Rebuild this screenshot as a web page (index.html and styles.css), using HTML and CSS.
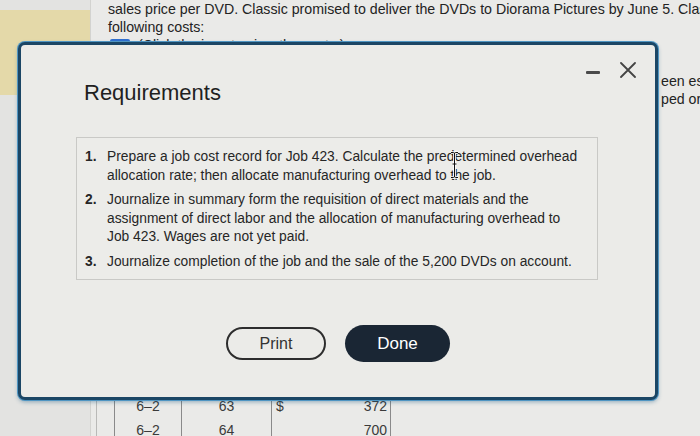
FILE: index.html
```html
<!DOCTYPE html>
<html lang="en">
<head>
<meta charset="utf-8">
<title>Requirements</title>
<link rel="stylesheet" href="styles.css">
</head>
<body>
<div class="page">
  <aside class="side"><div class="side-mark"></div></aside>
  <main class="content">
    <div class="intro">
      <p class="line">sales price per DVD. Classic promised to deliver the DVDs to Diorama Pictures by June 5. Classic incurred the</p>
      <p class="line">following costs:</p>
      <p class="line"><span class="chip"></span>(Click the icon to view the costs.)</p>
      <p class="line">&nbsp;</p>
      <p class="line peek">een estimated</p>
      <p class="line peek">ped or sold</p>
    </div>
    <table class="ledger">
      <tr><td class="c0"></td><td class="c1">6–2</td><td class="c2">63</td><td class="c3"><span class="cur">$</span><span class="amt">372</span></td></tr>
      <tr><td class="c0"></td><td class="c1">6–2</td><td class="c2">64</td><td class="c3"><span class="cur"></span><span class="amt">700</span></td></tr>
    </table>
  </main>
</div>

<div class="modal">
  <div class="modal-head">
    <h2 class="modal-title">Requirements</h2>
    <div class="controls">
      <span class="minimize"></span>
      <svg class="close" width="16" height="16" viewBox="0 0 16 16"><path d="M1 1 L15 15 M15 1 L1 15" stroke="#444" stroke-width="1.8" fill="none" stroke-linecap="round"/></svg>
    </div>
  </div>
  <div class="req-box">
    <ol class="req-list">
      <li><span class="num">1.</span><span class="txt">Prepare a job cost record for Job 423. Calculate the predetermined overhead<br>allocation rate; then allocate manufacturing overhead to the job.</span></li>
      <li><span class="num">2.</span><span class="txt">Journalize in summary form the requisition of direct materials and the<br>assignment of direct labor and the allocation of manufacturing overhead to<br>Job 423. Wages are not yet paid.</span></li>
      <li><span class="num">3.</span><span class="txt">Journalize completion of the job and the sale of the 5,200 DVDs on account.</span></li>
    </ol>
    <svg class="ibeam" width="9" height="28" viewBox="0 0 9 28"><path d="M1 1.5 H3.5 Q4.5 1.5 4.5 3 V25 Q4.5 26.5 3.5 26.5 H1 M8 1.5 H5.5 Q4.5 1.5 4.5 3 M4.5 25 Q4.5 26.5 5.5 26.5 H8 M2.5 13 H6.5" stroke="#fff" stroke-width="2.6" fill="none"/><path d="M1 1.5 H3.5 Q4.5 1.5 4.5 3 V25 Q4.5 26.5 3.5 26.5 H1 M8 1.5 H5.5 Q4.5 1.5 4.5 3 M4.5 25 Q4.5 26.5 5.5 26.5 H8 M2.5 13 H6.5" stroke="#111" stroke-width="1" fill="none"/></svg>
  </div>
  <div class="actions">
    <button class="btn btn-print">Print</button>
    <button class="btn btn-done">Done</button>
  </div>
</div>
</body>
</html>
```

FILE: styles.css
```css
* { box-sizing: border-box; }
html, body { margin: 0; padding: 0; }
body {
  width: 700px;
  height: 436px;
  overflow: hidden;
  background: #e7e7e5;
  font-family: "Liberation Sans", Arial, sans-serif;
  color: #222;
  position: relative;
}
.page {
  display: flex;
  height: 436px;
  overflow: hidden;
}
.side {
  flex: 0 0 91px;
  border-right: 1px solid #d3d3d0;
  background: #e3e3e1;
}
.side-mark {
  margin-top: 10px;
  height: 85px;
  background: #e4d9a9;
}
.content {
  flex: 1;
  display: flex;
  flex-direction: column;
  overflow: hidden;
  background: #eaeae8;
}
.intro { padding-left: 17px; }
.line {
  margin: 0;
  font-size: 14.2px;
  line-height: 18px;
  white-space: nowrap;
  color: #232323;
}
.peek { padding-left: 553px; }
.chip {
  display: inline-block;
  width: 20px;
  height: 12px;
  margin: 0 8px 0 2px;
  background: #2f6fcf;
  border-radius: 2px 2px 0 0;
  vertical-align: -1px;
}
.ledger {
  align-self: flex-start;
  table-layout: fixed;
  width: 294px;
  margin-top: auto;
  margin-bottom: -6px;
  margin-left: 5px;
  border-collapse: collapse;
  font-size: 14px;
  color: #3a3a3a;
}
.ledger td {
  height: 24px;
  padding: 0;
  border-left: 1px solid #8a8a8a;
  white-space: nowrap;
  overflow: hidden;
}
.ledger .c0 { width: 18px; border-left-color: #b9b9b7; }
.ledger .c1 { width: 67px; text-align: center; }
.ledger .c2 { width: 90px; text-align: center; }
.ledger .c3 { width: 119px; border-right: 1px solid #8a8a8a; }
.cur { display: inline-block; width: 20px; padding-left: 4px; }
.amt { display: inline-block; width: 96px; text-align: right; padding-right: 1px; }

.modal {
  position: absolute;
  left: 18px;
  top: 42px;
  width: 640px;
  height: 358px;
  background: #ebebe8;
  border: 3px solid #1b4665;
  border-radius: 7px;
  box-shadow: 0 0 0 1px #4f95c2, 0 2px 4px rgba(30, 90, 130, 0.45);
  display: flex;
  flex-direction: column;
}
.modal-head {
  display: flex;
  justify-content: space-between;
  align-items: flex-start;
  padding: 17px 19px 0 63px;
}
.modal-title {
  margin: 18px 0 0 0;
  font-size: 22px;
  line-height: 26px;
  font-weight: normal;
  color: #1f1f1f;
}
.controls {
  display: flex;
  align-items: flex-start;
  gap: 20px;
}
.minimize {
  display: block;
  width: 14px;
  height: 3px;
  margin-top: 9px;
  background: #4a4a4a;
  border-radius: 1px;
}
.close { display: block; }
.req-box {
  position: relative;
  margin: 31px 57px 0 55px;
  border: 1px solid #c9c9c6;
  background: #ecece9;
  padding: 10px 8px 8px 8px;
}
.req-list {
  list-style: none;
  margin: 0;
  padding: 0;
  display: flex;
  flex-direction: column;
  gap: 6px;
}
.req-list li {
  display: flex;
  font-size: 13.8px;
  line-height: 18.5px;
  color: #262626;
}
.num {
  flex: 0 0 22px;
  font-weight: bold;
}
.txt { white-space: nowrap; }
.ibeam {
  position: absolute;
  left: 373px;
  top: 13px;
}
.actions {
  display: flex;
  justify-content: center;
  align-items: center;
  gap: 19px;
  margin-top: 45px;
}
.btn {
  font-family: "Liberation Sans", Arial, sans-serif;
  cursor: pointer;
  padding: 0;
}
.btn-print {
  width: 100px;
  height: 33px;
  border: 2px solid #2d2d2d;
  border-radius: 17px;
  background: transparent;
  color: #333;
  font-size: 16px;
}
.btn-done {
  width: 105px;
  height: 37px;
  border: none;
  border-radius: 19px;
  background: #1a2634;
  color: #fff;
  font-size: 17px;
}
```
